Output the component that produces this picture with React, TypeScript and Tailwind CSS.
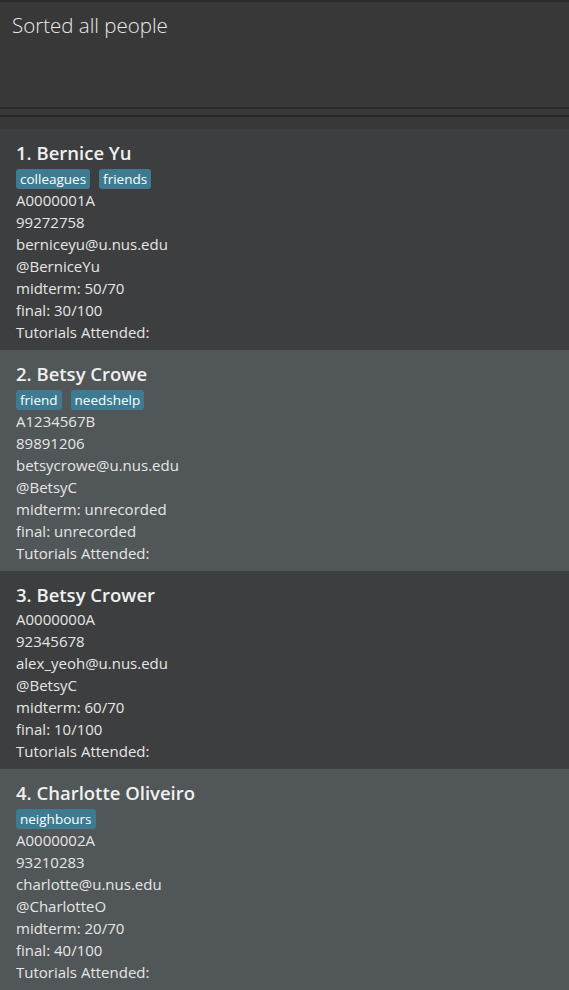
const people = [
  {
    name: "Bernice Yu",
    tags: ["colleagues", "friends"],
    id: "A0000001A",
    phone: "99272758",
    email: "berniceyu@u.nus.edu",
    tele: "@BerniceYu",
    midterm: "50/70",
    final: "30/100",
  },
  {
    name: "Betsy Crowe",
    tags: ["friend", "needshelp"],
    id: "A1234567B",
    phone: "89891206",
    email: "betsycrowe@u.nus.edu",
    tele: "@BetsyC",
    midterm: "unrecorded",
    final: "unrecorded",
  },
  {
    name: "Betsy Crower",
    tags: [],
    id: "A0000000A",
    phone: "92345678",
    email: "alex_yeoh@u.nus.edu",
    tele: "@BetsyC",
    midterm: "60/70",
    final: "10/100",
  },
  {
    name: "Charlotte Oliveiro",
    tags: ["neighbours"],
    id: "A0000002A",
    phone: "93210283",
    email: "charlotte@u.nus.edu",
    tele: "@CharlotteO",
    midterm: "20/70",
    final: "40/100",
  },
];

const PersonCard = ({ p, index }: { p: (typeof people)[number]; index: number }) => (
  <div
    className={`flex flex-col px-4 pt-[11px] pb-[7px] text-[15px] leading-[22px] text-[#e6e6e6] ${
      index % 2 === 0 ? "bg-[#3c3e3f]" : "bg-[#515658]"
    }`}
  >
    <div className="text-[18.5px] leading-[26px] font-semibold text-[#f0f0f0]">
      {index + 1}. {p.name}
    </div>
    {p.tags.length > 0 && (
      <div className="flex flex-row gap-[9px] mt-[3px]">
        {p.tags.map((t) => (
          <span
            key={t}
            className="bg-[#3e7b91] text-white text-[13.5px] leading-[20px] px-[4px] rounded-[3px]"
          >
            {t}
          </span>
        ))}
      </div>
    )}
    <div>{p.id}</div>
    <div>{p.phone}</div>
    <div>{p.email}</div>
    <div>{p.tele}</div>
    <div>midterm: {p.midterm}</div>
    <div>final: {p.final}</div>
    <div>Tutorials Attended:</div>
  </div>
);

export default function App() {
  return (
    <div
      className="w-[569px] h-[990px] overflow-hidden bg-[#383838] flex flex-col"
      style={{ fontFamily: "'Open Sans', sans-serif" }}
    >
      <div className="h-[2px] bg-[#2b2b2b]" />
      <div className="h-[106px] px-3 pt-[8px] text-[20.5px] text-[#eaeaea] font-light">
        Sorted all people
      </div>
      <div className="h-[2px] bg-[#2a2a2a]" />
      <div className="h-[6px]" />
      <div className="h-[2px] bg-[#272727]" />
      <div className="h-[12px]" />
      <div className="flex flex-col">
        {people.map((p, i) => (
          <PersonCard key={p.name} p={p} index={i} />
        ))}
      </div>
    </div>
  );
}
